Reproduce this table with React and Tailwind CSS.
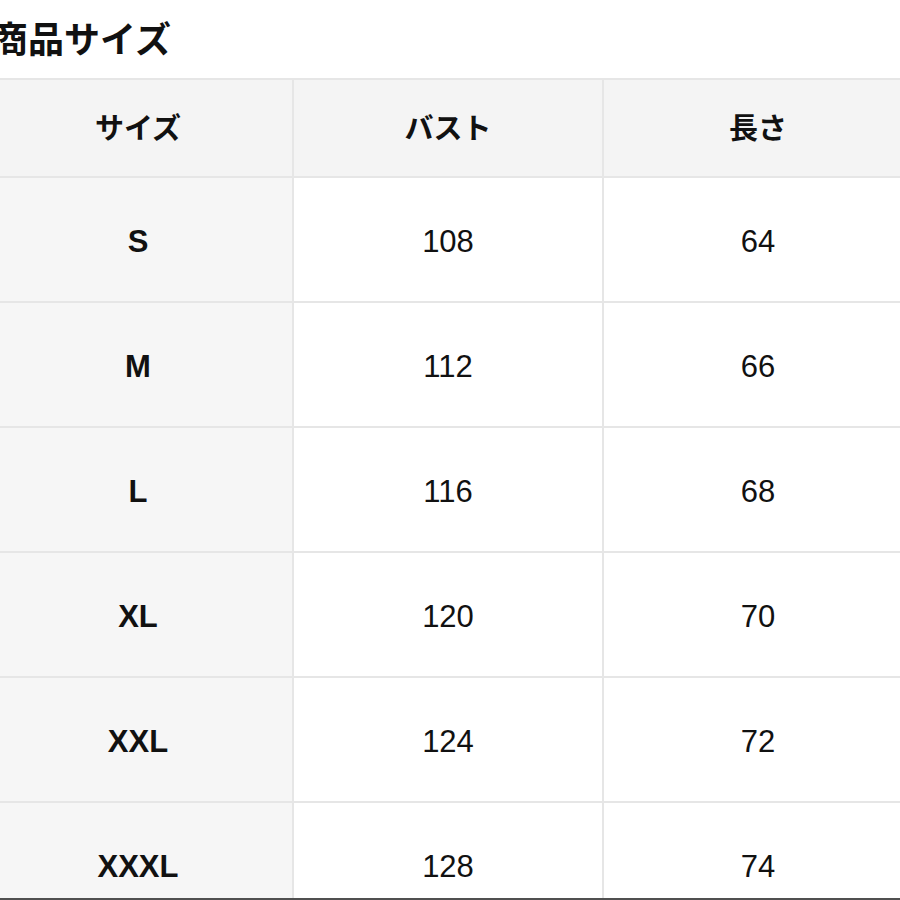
import React from "react";

const rows = [
  ["S", "108", "64"],
  ["M", "112", "66"],
  ["L", "116", "68"],
  ["XL", "120", "70"],
  ["XXL", "124", "72"],
  ["XXXL", "128", "74"],
];

const font = { fontFamily: '"Liberation Sans", "Noto Sans CJK JP", sans-serif' };

export default function App() {
  return (
    <div
      className="relative w-[900px] h-[900px] overflow-hidden bg-white text-[#111]"
      style={font}
    >
      <div className="h-[78px] flex items-center ml-[-8px] pt-[4px]">
        <span className="text-[36px] font-bold leading-none">商品サイズ</span>
      </div>
      <div className="ml-[-16px] w-[930px] border-t-2 border-[#e6e6e6] grid grid-cols-[310px_310px_310px]">
        {["サイズ", "バスト", "長さ"].map((h) => (
          <div
            key={h}
            className="h-[98px] pt-[4px] bg-[#f4f4f4] border-r-2 border-b-2 border-[#e6e6e6] flex items-center justify-center text-[29px] font-bold"
          >
            {h}
          </div>
        ))}
        {rows.map((r) => (
          <React.Fragment key={r[0]}>
            <div className="h-[125px] pt-[5px] bg-[#f6f6f6] border-r-2 border-b-2 border-[#e6e6e6] flex items-center justify-center text-[31px] font-bold">
              {r[0]}
            </div>
            <div className="h-[125px] pt-[5px] bg-white border-r-2 border-b-2 border-[#e6e6e6] flex items-center justify-center text-[31px]">
              {r[1]}
            </div>
            <div className="h-[125px] pt-[5px] bg-white border-r-2 border-b-2 border-[#e6e6e6] flex items-center justify-center text-[31px]">
              {r[2]}
            </div>
          </React.Fragment>
        ))}
      </div>
      <div className="absolute left-0 right-0 bottom-0 h-[2px] bg-[#505050]" />
    </div>
  );
}
